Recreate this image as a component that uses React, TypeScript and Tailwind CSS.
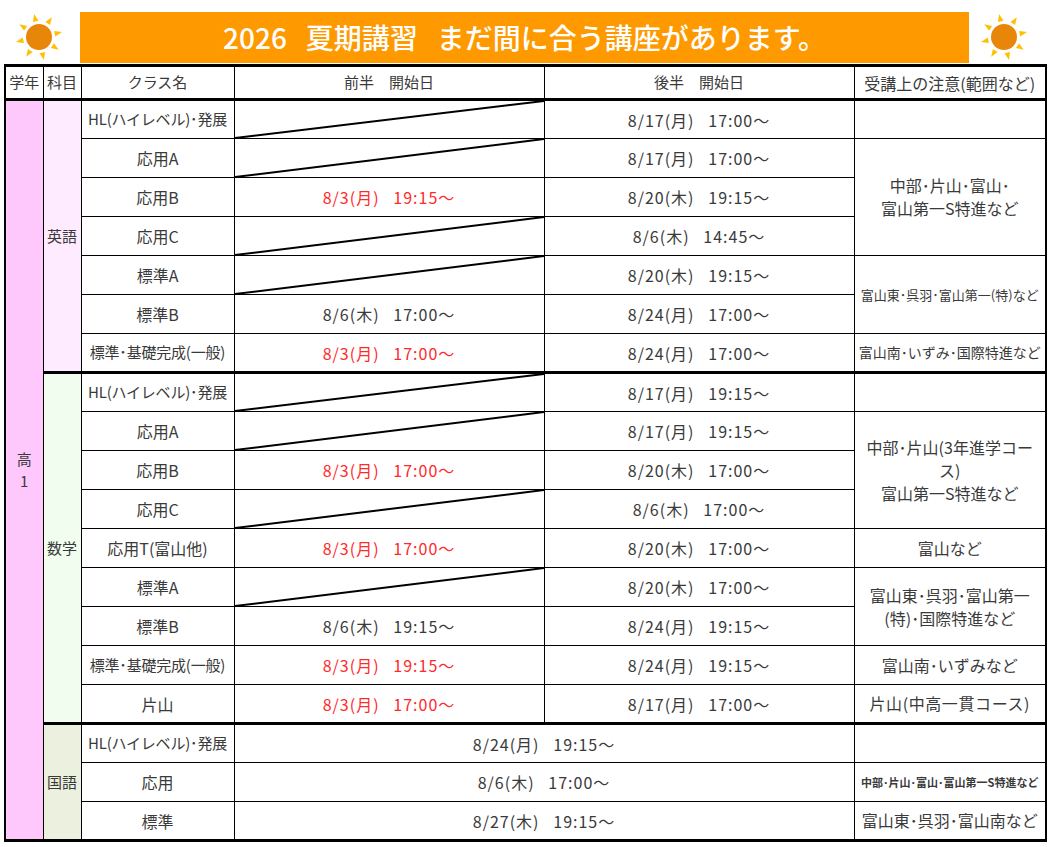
import type { ReactNode } from 'react'

type First = 'diag' | { text: string; red?: boolean }

type Row = {
  name: string
  small?: boolean
  first?: First
  second?: string
  both?: string
  note?: { lines: string[]; size: string; bold?: boolean; span?: number }
  skipNote?: boolean
}

type Group = { subject: string; bg: string; rows: Row[] }

const groups: Group[] = [
  {
    subject: '英語',
    bg: 'bg-[#ffebff]',
    rows: [
      { name: 'HL(ハイレベル)･発展', small: true, first: 'diag', second: '8/17(月)   17:00〜', note: { lines: [], size: 'text-[16px]' } },
      {
        name: '応用A',
        first: 'diag',
        second: '8/17(月)   17:00〜',
        note: { lines: ['中部･片山･富山･', '富山第一S特進など'], size: 'text-[16px]', span: 3 },
      },
      { name: '応用B', first: { text: '8/3(月)   19:15〜', red: true }, second: '8/20(木)   19:15〜', skipNote: true },
      { name: '応用C', first: 'diag', second: '8/6(木)   14:45〜', skipNote: true },
      {
        name: '標準A',
        first: 'diag',
        second: '8/20(木)   19:15〜',
        note: { lines: ['富山東･呉羽･富山第一(特)など'], size: 'text-[13px]', span: 2 },
      },
      { name: '標準B', first: { text: '8/6(木)   17:00〜' }, second: '8/24(月)   17:00〜', skipNote: true },
      {
        name: '標準･基礎完成(一般)',
        small: true,
        first: { text: '8/3(月)   17:00〜', red: true },
        second: '8/24(月)   17:00〜',
        note: { lines: ['富山南･いずみ･国際特進など'], size: 'text-[14px]' },
      },
    ],
  },
  {
    subject: '数学',
    bg: 'bg-[#f1fdef]',
    rows: [
      { name: 'HL(ハイレベル)･発展', small: true, first: 'diag', second: '8/17(月)   19:15〜', note: { lines: [], size: 'text-[16px]' } },
      {
        name: '応用A',
        first: 'diag',
        second: '8/17(月)   19:15〜',
        note: { lines: ['中部･片山(3年進学コー', 'ス)', '富山第一S特進など'], size: 'text-[16px]', span: 3 },
      },
      { name: '応用B', first: { text: '8/3(月)   17:00〜', red: true }, second: '8/20(木)   17:00〜', skipNote: true },
      { name: '応用C', first: 'diag', second: '8/6(木)   17:00〜', skipNote: true },
      {
        name: '応用T(富山他)',
        first: { text: '8/3(月)   17:00〜', red: true },
        second: '8/20(木)   17:00〜',
        note: { lines: ['富山など'], size: 'text-[16px]' },
      },
      {
        name: '標準A',
        first: 'diag',
        second: '8/20(木)   17:00〜',
        note: { lines: ['富山東･呉羽･富山第一', '(特)･国際特進など'], size: 'text-[16px]', span: 2 },
      },
      { name: '標準B', first: { text: '8/6(木)   19:15〜' }, second: '8/24(月)   19:15〜', skipNote: true },
      {
        name: '標準･基礎完成(一般)',
        small: true,
        first: { text: '8/3(月)   19:15〜', red: true },
        second: '8/24(月)   19:15〜',
        note: { lines: ['富山南･いずみなど'], size: 'text-[16px]' },
      },
      {
        name: '片山',
        first: { text: '8/3(月)   17:00〜', red: true },
        second: '8/17(月)   17:00〜',
        note: { lines: ['片山(中高一貫コース)'], size: 'text-[16px] tracking-[0.6px]' },
      },
    ],
  },
  {
    subject: '国語',
    bg: 'bg-[#ebf1de]',
    rows: [
      { name: 'HL(ハイレベル)･発展', small: true, both: '8/24(月)   19:15〜', note: { lines: [], size: 'text-[16px]' } },
      {
        name: '応用',
        both: '8/6(木)   17:00〜',
        note: { lines: ['中部･片山･富山･富山第一S特進など'], size: 'text-[11px]', bold: true },
      },
      {
        name: '標準',
        both: '8/27(木)   19:15〜',
        note: { lines: ['富山東･呉羽･富山南など'], size: 'text-[16px]' },
      },
    ],
  },
]

const totalRows = groups.reduce((n, g) => n + g.rows.length, 0)

function Sun() {
  const rays = [0, 45, 90, 135, 180, 225, 270, 315]
  return (
    <svg width="50" height="50" viewBox="-25 -25 50 50">
      {rays.map((a) => (
        <polygon key={a} points="-2.8,-16 2.8,-16 0,-23.5" fill="#ffc000" transform={`rotate(${a - 12})`} />
      ))}
      <circle r="13" fill="#e8860a" />
    </svg>
  )
}

function Diag() {
  return (
    <svg className="pointer-events-none absolute inset-0 h-full w-full" viewBox="0 0 100 100" preserveAspectRatio="none">
      <line x1="0" y1="100" x2="100" y2="0" stroke="#000" strokeWidth="2" vectorEffect="non-scaling-stroke" />
    </svg>
  )
}

function Cell({ children, className = '', ...rest }: { children?: ReactNode; className?: string; rowSpan?: number; colSpan?: number }) {
  return (
    <td {...rest} className={`border border-black p-0 text-center align-middle ${className}`}>
      {children}
    </td>
  )
}

export default function App() {
  return (
    <div className="h-[847px] w-[1057px] bg-white text-[#3a3a3a] [font-family:'Noto_Sans_CJK_JP','Noto_Sans',sans-serif]">
      <div className="flex h-[64px] items-end">
        <div className="flex h-[52px] w-[80px] items-center justify-center pb-[2px] pr-[2px]">
          <Sun />
        </div>
        <div className="mb-[1px] flex h-[51px] w-[889px] items-center justify-center bg-[#ff9900] pb-[2px] text-[28px] font-medium whitespace-pre text-white">
          2026   夏期講習   まだ間に合う講座があります。
        </div>
        <div className="flex h-[52px] w-[68px] items-center justify-center pb-[2px] pl-[1px]">
          <Sun />
        </div>
      </div>

      <table className="ml-[4px] w-[1041px] table-fixed border-collapse">
        <colgroup>
          <col className="w-[38px]" />
          <col className="w-[38px]" />
          <col className="w-[153px]" />
          <col className="w-[310px]" />
          <col className="w-[310px]" />
          <col className="w-[192px]" />
        </colgroup>
        <thead>
          <tr className="h-[34px] text-[15px]">
            <th className="border border-t-[3px] border-b-[3px] border-l-2 border-black p-0 font-normal">学年</th>
            <th className="border border-t-[3px] border-b-[3px] border-black p-0 font-normal">科目</th>
            <th className="border border-t-[3px] border-b-[3px] border-black p-0 font-normal">クラス名</th>
            <th className="border border-t-[3px] border-b-[3px] border-black p-0 font-normal whitespace-pre">前半　開始日</th>
            <th className="border border-t-[3px] border-b-[3px] border-black p-0 font-normal whitespace-pre">後半　開始日</th>
            <th className="border border-t-[3px] border-b-[3px] border-r-2 border-black p-0 text-[16px] font-normal">
              受講上の注意(範囲など)
            </th>
          </tr>
        </thead>
        <tbody className="text-[16px]">
          {groups.map((g, gi) =>
            g.rows.map((r, ri) => {
              const last = ri === g.rows.length - 1
              const b = last ? 'border-b-[3px]' : ''
              return (
                <tr key={`${gi}-${ri}`} className="h-[39px]">
                  {gi === 0 && ri === 0 && (
                    <Cell rowSpan={totalRows} className="border-b-[3px] border-l-2 bg-[#ffc8fc] text-[15px] leading-[22px]">
                      <div>高</div>
                      <div>1</div>
                    </Cell>
                  )}
                  {ri === 0 && (
                    <Cell rowSpan={g.rows.length} className={`border-b-[3px] text-[15px] ${g.bg}`}>
                      {g.subject}
                    </Cell>
                  )}
                  <Cell className={`${b} whitespace-nowrap ${r.small ? 'text-[15px] tracking-[-0.2px]' : 'text-[16px]'}`}>
                    {r.name}
                  </Cell>
                  {r.both ? (
                    <Cell colSpan={2} className={`${b} whitespace-pre tracking-[1px]`}>
                      {r.both}
                    </Cell>
                  ) : (
                    <>
                      <Cell
                        className={`${b} relative whitespace-pre tracking-[1px] ${r.first !== 'diag' && r.first?.red ? 'text-[#ff2a2a]' : ''}`}
                      >
                        {r.first === 'diag' ? <Diag /> : r.first?.text}
                      </Cell>
                      <Cell className={`${b} whitespace-pre tracking-[1px]`}>{r.second}</Cell>
                    </>
                  )}
                  {!r.skipNote && r.note && (
                    <Cell
                      rowSpan={r.note.span ?? 1}
                      className={`border-r-2 ${last || (r.note.span ?? 1) > 1 ? b : ''} ${r.note.size} ${r.note.bold ? 'font-semibold' : ''} leading-[23px]`}
                    >
                      {r.note.lines.map((l) => (
                        <div key={l} className="whitespace-nowrap">
                          {l}
                        </div>
                      ))}
                    </Cell>
                  )}
                </tr>
              )
            }),
          )}
        </tbody>
      </table>
    </div>
  )
}
